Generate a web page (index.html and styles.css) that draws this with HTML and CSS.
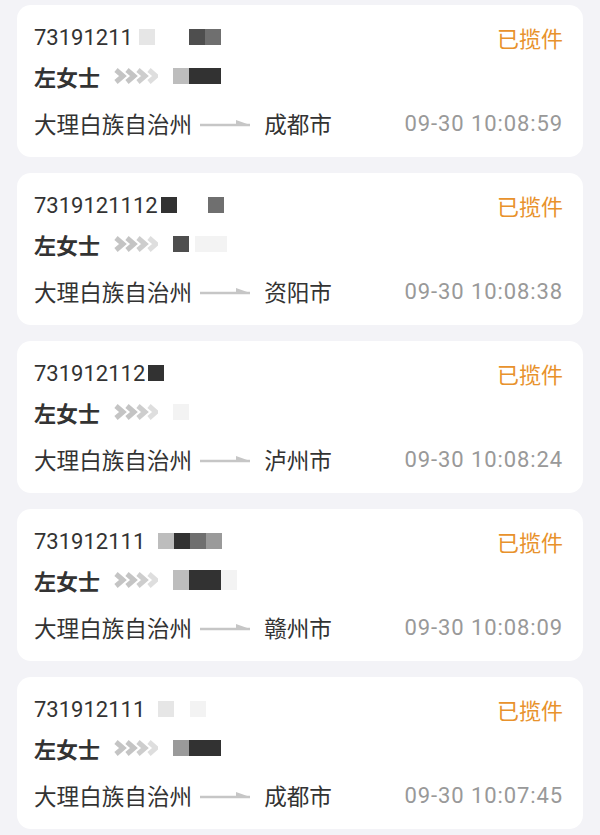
FILE: index.html
```html
<!DOCTYPE html>
<html lang="zh-CN">
<head>
    <meta charset="UTF-8">
    <meta name="viewport" content="width=device-width, initial-scale=1.0">
    <title>揽件列表</title>
    <link rel="stylesheet" href="styles.css">
</head>
<body>
    <div class="order-list">

        <div class="order-card">
            <div class="row top-row">
                <span class="waybill">73191211<span class="mask g6 faint"></span><span class="mask g34 dark"></span><span class="mask mid"></span></span>
                <span class="status">已揽件</span>
            </div>
            <div class="row name-row">
                <span class="name">左女士</span>
                <svg class="chevrons" viewBox="0 0 44 16"><polyline points="2,2 9,8 2,14" class="c1"/><polyline points="13,2 20,8 13,14" class="c1"/><polyline points="24,2 31,8 24,14" class="c2"/><polyline points="35,2 42,8 35,14" class="c3"/></svg>
                <span class="mask light"></span><span class="mask darker"></span><span class="mask darker"></span>
            </div>
            <div class="row route-row">
                <span class="place">大理白族自治州</span>
                <svg class="arrow" viewBox="0 0 50 12"><line x1="0" y1="8" x2="50" y2="8"/><polygon points="36,3 50,8 36,8"/></svg>
                <span class="place">成都市</span>
                <span class="time">09-30 10:08:59</span>
            </div>
        </div>

        <div class="order-card">
            <div class="row top-row">
                <span class="waybill">7319121112<span class="mask g3 darker"></span><span class="mask g31 mid"></span></span>
                <span class="status">已揽件</span>
            </div>
            <div class="row name-row">
                <span class="name">左女士</span>
                <svg class="chevrons" viewBox="0 0 44 16"><polyline points="2,2 9,8 2,14" class="c1"/><polyline points="13,2 20,8 13,14" class="c1"/><polyline points="24,2 31,8 24,14" class="c2"/><polyline points="35,2 42,8 35,14" class="c3"/></svg>
                <span class="mask dark"></span><span class="mask g6 ghost"></span><span class="mask ghost"></span>
            </div>
            <div class="row route-row">
                <span class="place">大理白族自治州</span>
                <svg class="arrow" viewBox="0 0 50 12"><line x1="0" y1="8" x2="50" y2="8"/><polygon points="36,3 50,8 36,8"/></svg>
                <span class="place">资阳市</span>
                <span class="time">09-30 10:08:38</span>
            </div>
        </div>

        <div class="order-card">
            <div class="row top-row">
                <span class="waybill">731912112<span class="mask g3 darker"></span></span>
                <span class="status">已揽件</span>
            </div>
            <div class="row name-row">
                <span class="name">左女士</span>
                <svg class="chevrons" viewBox="0 0 44 16"><polyline points="2,2 9,8 2,14" class="c1"/><polyline points="13,2 20,8 13,14" class="c1"/><polyline points="24,2 31,8 24,14" class="c2"/><polyline points="35,2 42,8 35,14" class="c3"/></svg>
                <span class="mask ghost"></span>
            </div>
            <div class="row route-row">
                <span class="place">大理白族自治州</span>
                <svg class="arrow" viewBox="0 0 50 12"><line x1="0" y1="8" x2="50" y2="8"/><polygon points="36,3 50,8 36,8"/></svg>
                <span class="place">泸州市</span>
                <span class="time">09-30 10:08:24</span>
            </div>
        </div>

        <div class="order-card">
            <div class="row top-row">
                <span class="waybill">731912111<span class="mask g13 light"></span><span class="mask darker"></span><span class="mask mid"></span><span class="mask soft"></span></span>
                <span class="status">已揽件</span>
            </div>
            <div class="row name-row">
                <span class="name">左女士</span>
                <svg class="chevrons" viewBox="0 0 44 16"><polyline points="2,2 9,8 2,14" class="c1"/><polyline points="13,2 20,8 13,14" class="c1"/><polyline points="24,2 31,8 24,14" class="c2"/><polyline points="35,2 42,8 35,14" class="c3"/></svg>
                <span class="mask tall light"></span><span class="mask tall darker"></span><span class="mask tall darker"></span><span class="mask tall ghost"></span>
            </div>
            <div class="row route-row">
                <span class="place">大理白族自治州</span>
                <svg class="arrow" viewBox="0 0 50 12"><line x1="0" y1="8" x2="50" y2="8"/><polygon points="36,3 50,8 36,8"/></svg>
                <span class="place">赣州市</span>
                <span class="time">09-30 10:08:09</span>
            </div>
        </div>

        <div class="order-card">
            <div class="row top-row">
                <span class="waybill">731912111<span class="mask g13 faint"></span><span class="mask g16 ghost"></span></span>
                <span class="status">已揽件</span>
            </div>
            <div class="row name-row">
                <span class="name">左女士</span>
                <svg class="chevrons" viewBox="0 0 44 16"><polyline points="2,2 9,8 2,14" class="c1"/><polyline points="13,2 20,8 13,14" class="c1"/><polyline points="24,2 31,8 24,14" class="c2"/><polyline points="35,2 42,8 35,14" class="c3"/></svg>
                <span class="mask soft"></span><span class="mask darker"></span><span class="mask darker"></span>
            </div>
            <div class="row route-row">
                <span class="place">大理白族自治州</span>
                <svg class="arrow" viewBox="0 0 50 12"><line x1="0" y1="8" x2="50" y2="8"/><polygon points="36,3 50,8 36,8"/></svg>
                <span class="place">成都市</span>
                <span class="time">09-30 10:07:45</span>
            </div>
        </div>

    </div>
</body>
</html>
```

FILE: styles.css
```css
body {
  margin: 0;
  background: #f3f3f7;
  font-family: Roboto, "Noto Sans CJK SC", sans-serif;
  color: #333;
}

.order-list {
  display: flex;
  flex-direction: column;
  gap: 16px;
  padding: 5px 17px 0 17px;
}

.order-card {
  height: 152px;
  box-sizing: border-box;
  background: #fff;
  border-radius: 14px;
  padding: 17px 20px 0 17px;
}

.row {
  display: flex;
  align-items: center;
  height: 30px;
  font-size: 22px;
}

.name-row {
  margin-top: 9px;
}

.route-row {
  margin-top: 17px;
}

.waybill {
  display: flex;
  align-items: center;
  font-size: 22px;
}

.status {
  margin-left: auto;
  color: #e8922c;
}

.name {
  font-weight: bold;
}

/* chevrons between name and phone */
.chevrons {
  width: 44px;
  height: 16px;
  margin: 0 15px 0 14px;
}

.chevrons polyline {
  fill: none;
  stroke-width: 5;
}

.chevrons .c1 { stroke: #c4c4c4; }
.chevrons .c2 { stroke: #cdcdcd; }
.chevrons .c3 { stroke: #dedede; }

/* route arrow */
.place {
  font-size: 22.6px;
}

.arrow {
  width: 50px;
  height: 12px;
  margin: 0 14px 0 8px;
}

.arrow line {
  stroke: #c6c6c6;
  stroke-width: 2.5;
}

.arrow polygon {
  fill: #c6c6c6;
}

.time {
  margin-left: auto;
  color: #999;
  font-size: 22px;
  letter-spacing: 0.9px;
}

/* pixelated privacy blur */
.mask {
  display: inline-block;
  width: 16px;
  height: 16px;
}

.mask.tall {
  height: 20px;
}

.g3 { margin-left: 3px; }
.g6 { margin-left: 6px; }
.g13 { margin-left: 13px; }
.g16 { margin-left: 16px; }
.g31 { margin-left: 31px; }
.g34 { margin-left: 34px; }

.darker { background: #323232; }
.dark { background: #4e4e4e; }
.mid { background: #6f6f6f; }
.soft { background: #9a9a9a; }
.light { background: #bdbdbd; }
.faint { background: #e6e6e6; }
.ghost { background: #f3f3f3; }
```
